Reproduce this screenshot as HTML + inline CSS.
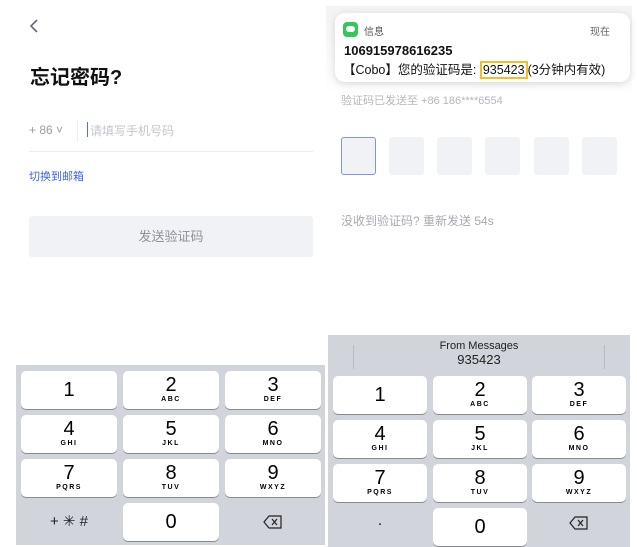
<!DOCTYPE html>
<html><head><meta charset="utf-8"><style>
*{margin:0;padding:0;box-sizing:border-box}
body{width:637px;height:547px;background:#fff;position:relative;overflow:hidden;font-family:"Liberation Sans","Noto Sans CJK SC",sans-serif}
.a{position:absolute;white-space:nowrap}
.kb{position:absolute;background:#d1d4da}
.k{position:absolute;background:#fff;border-radius:5px;box-shadow:0 1px 0 #888c92;text-align:center;color:#000}
.k b{display:block;font-weight:normal;font-size:20px;line-height:20px;margin-top:4px}
.k i{display:block;font-style:normal;font-size:7px;font-weight:bold;letter-spacing:1.5px;line-height:9px}
.box{position:absolute;top:137px;width:35px;height:38px;background:#f1f2f6;border-radius:3px}
</style></head><body>
<svg class="a" style="left:28px;top:18px" width="12" height="16"><path d="M9 2 L3 8 L9 14" stroke="#666a75" stroke-width="1.6" fill="none"/></svg>
<div class="a" style="left:30px;top:61px;font-size:20px;font-weight:bold;color:#111">忘记密码?</div>
<div class="a" style="left:29px;top:123px;font-size:12px;color:#9a9ca5">+ 86 ˅</div>
<div class="a" style="left:77px;top:120px;width:1px;height:22px;background:#eee"></div>
<div class="a" style="left:87px;top:122px;width:1px;height:15px;background:#4d6ef5"></div>
<div class="a" style="left:90px;top:122px;font-size:12px;color:#c4c6cc">请填写手机号码</div>
<div class="a" style="left:29px;top:151px;width:284px;height:1px;background:#ececef"></div>
<div class="a" style="left:29px;top:168px;font-size:11px;color:#3f62e0">切换到邮箱</div>
<div class="a" style="left:29px;top:216px;width:284px;height:41px;background:#f1f2f6;border-radius:3px;text-align:center;line-height:41px;font-size:13px;color:#8e909a">发送验证码</div>
<div class="kb" style="left:16px;top:365px;width:309px;height:180px"></div>
<div class="k" style="left:21px;top:371px;width:96px;height:38px"><b style="margin-top:9px">1</b></div>
<div class="k" style="left:123px;top:371px;width:96px;height:38px"><b>2</b><i>ABC</i></div>
<div class="k" style="left:225px;top:371px;width:96px;height:38px"><b>3</b><i>DEF</i></div>
<div class="k" style="left:21px;top:415px;width:96px;height:38px"><b>4</b><i>GHI</i></div>
<div class="k" style="left:123px;top:415px;width:96px;height:38px"><b>5</b><i>JKL</i></div>
<div class="k" style="left:225px;top:415px;width:96px;height:38px"><b>6</b><i>MNO</i></div>
<div class="k" style="left:21px;top:459px;width:96px;height:38px"><b>7</b><i>PQRS</i></div>
<div class="k" style="left:123px;top:459px;width:96px;height:38px"><b>8</b><i>TUV</i></div>
<div class="k" style="left:225px;top:459px;width:96px;height:38px"><b>9</b><i>WXYZ</i></div>
<div class="a" style="left:21px;top:512px;width:96px;text-align:center;font-size:15px;color:#222">+ ✳ #</div>
<div class="k" style="left:123px;top:503px;width:96px;height:38px"><b style="margin-top:9px">0</b></div>
<svg class="a" style="left:263px;top:515px" width="20" height="14"><path d="M6 1 H18 V13 H6 L1 7 Z" stroke="#222" stroke-width="1.2" fill="none"/><path d="M9 4 L14 10 M14 4 L9 10" stroke="#222" stroke-width="1.2"/></svg>
<div class="a" style="left:326px;top:6px;width:306px;height:90px;background:linear-gradient(#f3f3f5,#fff)"></div>
<div class="a" style="left:335px;top:13px;width:295px;height:69px;background:#fff;border-radius:10px;box-shadow:0 2px 8px rgba(0,0,0,.15)"></div>
<div class="a" style="left:343px;top:22px;width:15px;height:15px;background:#34c759;border-radius:4px"></div>
<div class="a" style="left:346px;top:26px;width:9px;height:6px;background:#fff;border-radius:4px"></div>
<div class="a" style="left:364px;top:23px;font-size:10px;color:#555">信息</div>
<div class="a" style="left:590px;top:23px;font-size:10px;color:#666">现在</div>
<div class="a" style="left:344px;top:43px;font-size:13px;font-weight:bold;color:#111">106915978616235</div>
<div class="a" style="left:343px;top:59px;font-size:12.5px;color:#111">【Cobo】您的验证码是: <span style="display:inline-block;border:2px solid #f5be1e;padding:0 1px;margin:-2px 0">935423</span>(3分钟内有效)</div>
<div class="a" style="left:341px;top:92px;font-size:11px;color:#b5b7bf">验证码已发送至 +86 186****6554</div>
<div class="box" style="left:341px;border:1px solid #7d93e8"></div>
<div class="box" style="left:389px"></div><div class="box" style="left:437px"></div>
<div class="box" style="left:485px"></div><div class="box" style="left:534px"></div>
<div class="box" style="left:582px"></div>
<div class="a" style="left:341px;top:212px;font-size:12px;color:#a8aab2">没收到验证码? 重新发送 54s</div>
<div class="kb" style="left:328px;top:335px;width:302px;height:212px"></div>
<div class="a" style="left:353px;top:345px;width:1px;height:24px;background:#bbb"></div>
<div class="a" style="left:604px;top:345px;width:1px;height:24px;background:#bbb"></div>
<div class="a" style="left:328px;top:340px;width:302px;text-align:center;font-size:11px;color:#222;line-height:13px">From Messages<br><span style="font-size:13px">935423</span></div>
<div class="k" style="left:333px;top:376px;width:94px;height:38px"><b style="margin-top:9px">1</b></div>
<div class="k" style="left:433px;top:376px;width:94px;height:38px"><b>2</b><i>ABC</i></div>
<div class="k" style="left:532px;top:376px;width:94px;height:38px"><b>3</b><i>DEF</i></div>
<div class="k" style="left:333px;top:420px;width:94px;height:38px"><b>4</b><i>GHI</i></div>
<div class="k" style="left:433px;top:420px;width:94px;height:38px"><b>5</b><i>JKL</i></div>
<div class="k" style="left:532px;top:420px;width:94px;height:38px"><b>6</b><i>MNO</i></div>
<div class="k" style="left:333px;top:464px;width:94px;height:38px"><b>7</b><i>PQRS</i></div>
<div class="k" style="left:433px;top:464px;width:94px;height:38px"><b>8</b><i>TUV</i></div>
<div class="k" style="left:532px;top:464px;width:94px;height:38px"><b>9</b><i>WXYZ</i></div>
<div class="a" style="left:333px;top:512px;width:94px;text-align:center;font-size:16px;color:#222">.</div>
<div class="k" style="left:433px;top:508px;width:94px;height:38px"><b style="margin-top:9px">0</b></div>
<svg class="a" style="left:569px;top:516px" width="20" height="14"><path d="M6 1 H18 V13 H6 L1 7 Z" stroke="#222" stroke-width="1.2" fill="none"/><path d="M9 4 L14 10 M14 4 L9 10" stroke="#222" stroke-width="1.2"/></svg>
</body></html>
